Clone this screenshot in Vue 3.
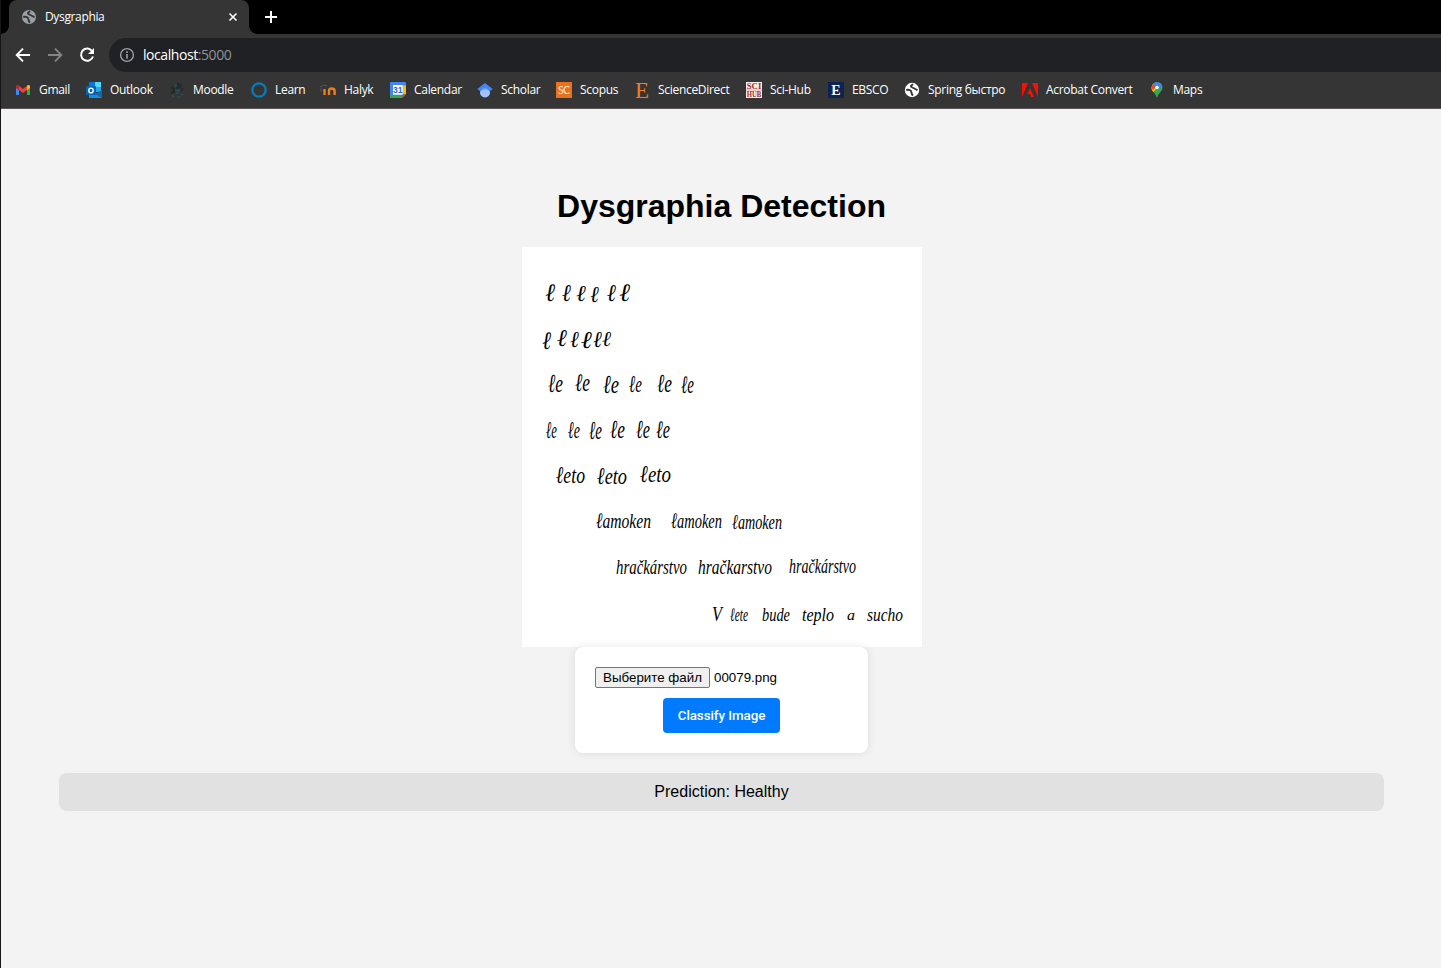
<script setup>
const bookmarks = [
  { icon: 'gmail', label: 'Gmail', width: 71 },
  { icon: 'outlook', label: 'Outlook', width: 83 },
  { icon: 'moodle', label: 'Moodle', width: 82 },
  { icon: 'learn', label: 'Learn', width: 69 },
  { icon: 'halyk', label: 'Halyk', width: 70 },
  { icon: 'calendar', label: 'Calendar', width: 87 },
  { icon: 'scholar', label: 'Scholar', width: 79 },
  { icon: 'scopus', label: 'Scopus', width: 78 },
  { icon: 'sd', label: 'ScienceDirect', width: 112 },
  { icon: 'scihub', label: 'Sci-Hub', width: 82 },
  { icon: 'ebsco', label: 'EBSCO', width: 76 },
  { icon: 'globe', label: 'Spring быстро', width: 118 },
  { icon: 'acrobat', label: 'Acrobat Convert', width: 127 },
  { icon: 'maps', label: 'Maps', width: 70 },
]

// Each word on the sample sheet: text, left, baseline, width, font size
const words = [
  ['ℓ', 23, 54, 10, 25], ['ℓ', 40, 54, 9, 24], ['ℓ', 54, 54, 10, 23], ['ℓ', 68, 55, 9, 23], ['ℓ', 85, 54, 9, 24], ['ℓ', 97, 54, 11, 25],
  ['ℓ', 20, 102, 9, 25], ['ℓ', 35, 99, 10, 24], ['ℓ', 48, 100, 9, 23], ['ℓ', 59, 101, 11, 24], ['ℓ', 71, 100, 9, 23], ['ℓ', 80, 99, 9, 21],
  ['ℓe', 26, 145, 15, 26], ['ℓe', 53, 144, 15, 25], ['ℓe', 81, 146, 16, 26], ['ℓe', 107, 145, 13, 24], ['ℓe', 135, 145, 15, 26], ['ℓe', 159, 146, 13, 25],
  ['ℓe', 24, 191, 11, 24], ['ℓe', 46, 191, 12, 24], ['ℓe', 67, 192, 13, 26], ['ℓe', 88, 191, 15, 26], ['ℓe', 114, 191, 14, 26], ['ℓe', 134, 191, 14, 25],
  ['ℓeto', 34, 236, 29, 24], ['ℓeto', 75, 237, 30, 24], ['ℓeto', 118, 235, 31, 24],
  ['ℓamoken', 74, 281, 55, 22], ['ℓamoken', 149, 281, 51, 22], ['ℓamoken', 210, 282, 50, 21],
  ['hračkárstvo', 94, 327, 71, 21], ['hračkarstvo', 176, 327, 74, 21], ['hračkárstvo', 267, 326, 67, 21],
  ['V', 190, 374, 10, 20], ['ℓete', 208, 374, 18, 19], ['bude', 240, 374, 28, 19], ['teplo', 280, 374, 32, 19], ['a', 325, 373, 8, 14], ['sucho', 345, 374, 36, 19],
]
</script>

<template>
  <div class="window">
    <header class="tabstrip">
      <div class="tab">
        <svg class="tabicon" viewBox="0 0 16 16"><circle cx="8" cy="8" r="7" fill="#9aa0a6" /><path d="M2.2 8Q7 7.2 7.3 9.8T9 13.5M9.3 2.4Q5 4 8.3 5.5T13.6 8.2" fill="none" stroke="#353535" stroke-width="1.9" /></svg>
        <span class="tabtitle">Dysgraphia</span>
        <svg class="close" viewBox="0 0 10 10"><path d="M1.5 1.5 8.5 8.5M8.5 1.5 1.5 8.5" stroke="#fff" stroke-width="1.6" /></svg>
      </div>
      <svg class="plus" viewBox="0 0 14 14"><path d="M7 1V13M1 7H13" stroke="#fff" stroke-width="2" /></svg>
    </header>

    <nav class="toolbar">
      <svg class="nav" viewBox="0 0 16 16"><path d="M15 8H2M8 1.7 1.7 8 8 14.3" fill="none" stroke="#fff" stroke-width="1.9" /></svg>
      <svg class="nav" viewBox="0 0 16 16"><path d="M1 8H14M8 1.7 14.3 8 8 14.3" fill="none" stroke="#858585" stroke-width="1.9" /></svg>
      <svg class="nav" viewBox="0 0 16 16"><path d="M13.2 4.2A6.1 6.1 0 1 0 14 9.5" fill="none" stroke="#fff" stroke-width="2" /><path d="M15 1V7H9Z" fill="#fff" /></svg>
      <div class="omnibox">
        <svg class="info" viewBox="0 0 16 16"><circle cx="8" cy="8" r="6.4" fill="none" stroke="#9aa0a6" stroke-width="1.4" /><path d="M8 7V11.7M8 4.3V5.9" stroke="#9aa0a6" stroke-width="1.6" /></svg>
        <span class="url">localhost<span class="port">:5000</span></span>
      </div>
    </nav>

    <nav class="bookmarks">
      <div v-for="b in bookmarks" :key="b.label" class="bookmark" :style="{ width: b.width + 'px' }">
        <svg class="bicon" viewBox="0 0 16 16">
          <g v-if="b.icon === 'gmail'">
            <path d="M1 4V13H4V7L1 4" fill="#4285f4" /><path d="M12 7V13H15V4Z" fill="#34a853" />
            <path d="M1 4.5Q1 2.5 3 3L8 7 13 3Q15 2.5 15 4.5L12 8 8 11 4 8Z" fill="#ea4335" />
            <path d="M12 4 13 3Q15 2.5 15 4.5V6L12 8Z" fill="#fbbc04" /><path d="M1 4.5Q1 2.5 3 3L4 4V8L1 6Z" fill="#c5221f" />
          </g>
          <g v-else-if="b.icon === 'outlook'">
            <path d="M3 0H15V10H3Z" fill="#28a8ea" /><path d="M9 0H15V5H9Z" fill="#50d9ff" /><path d="M3 0H9V5H3Z" fill="#0078d4" />
            <path d="M3 8 10 12 16 8V16H3Z" fill="#1490df" /><path d="M16 8V16L9 12Z" fill="#1066b5" />
            <rect y="4" width="10" height="9" rx="1" fill="#0364b8" /><ellipse cx="5" cy="8.5" rx="2.2" ry="2.4" fill="none" stroke="#fff" stroke-width="1.4" />
          </g>
          <g v-else-if="b.icon === 'moodle'" fill="none">
            <path d="M10 1Q7 4 9 7M12 2 10 7M2 5 6 8M2 11 6 9M12 9 14 6" stroke="#222829" stroke-width="2" />
            <path d="M7 2V5M6 8 9 9 11 7M3 13 5 15M8 10V12M8 15H12M12 12 14 13" stroke="#26566b" stroke-width="1.2" />
          </g>
          <circle v-else-if="b.icon === 'learn'" cx="8" cy="8" r="6.7" fill="none" stroke="#087cb5" stroke-width="2.3" />
          <g v-else-if="b.icon === 'halyk'" fill="none">
            <path d="M0 5 4 3 7 4M1 6V10" stroke="#555" stroke-width="1" />
            <path d="M4.5 13V7M9 13V9Q9 6.5 11.8 6.5T14.6 9V13" stroke="#e9801d" stroke-width="2.4" />
          </g>
          <g v-else-if="b.icon === 'calendar'">
            <rect width="16" height="16" rx="1" fill="#4285f4" /><path d="M12.5 3.5H16V12.5H12.5Z" fill="#fbbc04" />
            <path d="M0 12.5H12.5V16H1L0 15Z" fill="#34a853" /><path d="M16 12.5V16H12.5V12.5Z" fill="#353535" /><path d="M12.5 12.5H16L12.5 16Z" fill="#ea4335" />
            <rect x="3" y="3" width="9.7" height="9.7" fill="#fff" /><text x="7.8" y="11" text-anchor="middle" class="ic sans" font-size="8.5" fill="#1967d2">31</text>
          </g>
          <g v-else-if="b.icon === 'scholar'">
            <circle cx="8" cy="10.5" r="5" fill="#a0c3ff" /><path d="M8 1 15.7 7 12.5 9.5Q11 6.5 8 6.5T3.5 9.5L.3 7Z" fill="#4285f4" /><path d="M3.5 9Q5 6.5 8 6.5T12.5 9Q11 8 8 8T3.5 9" fill="#76a7fa" />
          </g>
          <g v-else-if="b.icon === 'scopus'"><rect width="16" height="16" fill="#e9711c" /><text x="8" y="12" text-anchor="middle" class="ic thin" font-size="10.5" textLength="12" fill="#ffe8d8">SC</text></g>
          <text v-else-if="b.icon === 'sd'" x="8" y="15.8" text-anchor="middle" class="ic serif" font-size="23" textLength="14" lengthAdjust="spacingAndGlyphs" fill="#ee7d22">E</text>
          <g v-else-if="b.icon === 'scihub'">
            <rect width="16" height="16" fill="#f5efed" /><text x=".7" y="6.6" textLength="14.6" lengthAdjust="spacingAndGlyphs" class="ic serifbold" font-size="8" fill="#a32822">SCI</text>
            <path d="M0 8H16" stroke="#d9a8a3" /><text x=".7" y="15" textLength="14.6" lengthAdjust="spacingAndGlyphs" class="ic serifbold" font-size="8" fill="#a32822">HUB</text>
          </g>
          <g v-else-if="b.icon === 'ebsco'"><rect width="16" height="16" fill="#0d2351" /><text x="8" y="13" text-anchor="middle" class="ic serifbold" font-size="14" fill="#fff">E</text></g>
          <g v-else-if="b.icon === 'globe'"><circle cx="8" cy="8" r="7.2" fill="#fff" /><path d="M2.2 8Q7 7.2 7.3 9.8T9 13.5M9.3 2.4Q5 4 8.3 5.5T13.6 8.2" fill="none" stroke="#353535" stroke-width="1.9" /></g>
          <path v-else-if="b.icon === 'acrobat'" d="M0 1H6L0 15ZM10 1H16V15ZM8 6 12 15H9.3L8 12H5.3Z" fill="#fa0f00" />
          <g v-else>
            <path d="M3.5 9Q2.5 7.5 2.5 5.5A5.5 5.5 0 0 1 13.5 5.5C13.5 9 9.5 11 8.5 15Q8 16 7.5 15Q7 12.5 3.5 9" fill="#34a853" />
            <path d="M3.5 9Q2.5 7.5 2.5 5.5L4 2 8 6 4.5 10" fill="#fbbc04" /><path d="M2.6 6 4 2 7 4.5 4 8Z" fill="#ea4335" />
            <path d="M4 2A5.5 5.5 0 0 1 13 3.3L9 7 7 4.5Z" fill="#4285f4" /><circle cx="8" cy="5.5" r="1.8" fill="#fff" />
          </g>
        </svg>
        <span class="blabel">{{ b.label }}</span>
      </div>
    </nav>

    <main class="page">
      <h1>Dysgraphia Detection</h1>
      <svg class="sheet" viewBox="0 0 400 400">
        <text v-for="(w, i) in words" :key="i" class="ink" :x="w[1]" :y="w[2]" :textLength="w[3]" :font-size="w[4]" lengthAdjust="spacingAndGlyphs">{{ w[0] }}</text>
      </svg>
      <form class="card" @submit.prevent>
        <div class="filerow">
          <button type="button" class="file">Выберите файл</button>
          <span class="filename">00079.png</span>
        </div>
        <button type="submit" class="classify">Classify Image</button>
      </form>
      <div class="prediction">Prediction: Healthy</div>
    </main>
  </div>
</template>

<style>
body { margin: 0; background: #f3f3f3; overflow: hidden; }
</style>

<style scoped>
.window { box-sizing: border-box; height: 968px; border-left: 1px solid #161616; overflow: hidden; font-family: "Open Sans", "Noto Sans", sans-serif; color: #fff; display: flex; flex-direction: column; background: #f3f3f3; }
svg { flex: none; display: block; overflow: visible; }
.tabstrip { height: 34px; background: #000; display: flex; align-items: center; flex: none; }
.tab { position: relative; box-sizing: border-box; margin-left: 8px; width: 240px; height: 34px; background: #353535; border-radius: 8px 8px 0 0; display: flex; align-items: center; padding: 0 11px 0 12px; }
.tab::before, .tab::after { content: ""; position: absolute; bottom: 0; width: 8px; height: 8px; }
.tab::before { left: -8px; background: radial-gradient(circle at 0 0, #000 7.5px, #353535 8px); }
.tab::after { right: -8px; background: radial-gradient(circle at 100% 0, #000 7.5px, #353535 8px); }
.tabicon { width: 16px; height: 16px; }
.tabtitle { flex: 1; margin-left: 8px; padding-bottom: 1px; font-size: 12px; font-weight: 500; letter-spacing: -0.35px; }
.close { width: 10px; height: 10px; }
.plus { width: 14px; height: 14px; margin-left: 15px; }
.toolbar { height: 38px; padding: 4px 0 0 14px; box-sizing: border-box; background: #353535; display: flex; align-items: center; flex: none; }
.nav { width: 16px; height: 16px; margin-right: 16px; }
.omnibox { flex: 1; height: 34px; margin-left: -2px; background: #202124; border-radius: 17px 0 0 17px; display: flex; align-items: center; }
.info { width: 16px; height: 16px; margin-left: 10px; }
.url { font-size: 14px; margin-left: 8px; padding-bottom: 2px; letter-spacing: -0.43px; }
.port { color: #8f9296; }
.bookmarks { height: 37px; box-sizing: border-box; padding-left: 14px; border-bottom: 1px solid #5b5555; background: #353535; display: flex; align-items: center; flex: none; }
.bookmark { display: flex; align-items: center; gap: 8px; flex: none; white-space: nowrap; }
.bicon { width: 16px; height: 16px; }
.blabel { padding-bottom: 1px; font-size: 12px; font-weight: 500; letter-spacing: -0.3px; }
.ic.sans { font-family: "Liberation Sans", sans-serif; font-weight: 700; }
.ic.thin { font-family: Lato, sans-serif; }
.ic.serif { font-family: "Liberation Serif", serif; }
.ic.serifbold { font-family: "Liberation Serif", serif; font-weight: 700; }
.page { flex: 1; box-sizing: border-box; padding: 79px 57px 0 58px; display: flex; flex-direction: column; align-items: center; color: #000; font-family: "Liberation Sans", Arial, sans-serif; }
h1 { margin: 0 0 22px; font-size: 32px; line-height: 37px; font-weight: 700; }
.sheet { width: 400px; height: 400px; background: #fff; margin-left: 1px; }
.ink { font-family: "Liberation Serif", serif; font-style: italic; fill: #000; }
.card { position: relative; box-sizing: border-box; width: 293px; height: 106px; padding: 20px; border-radius: 8px; background: #fff; box-shadow: 0 0 10px rgba(0, 0, 0, 0.1); display: flex; flex-direction: column; align-items: center; gap: 10px; }
.filerow { align-self: stretch; height: 21px; display: flex; align-items: center; gap: 4px; }
.file { box-sizing: border-box; width: 115px; height: 21px; padding: 0; border: 1px solid #767676; border-radius: 2px; background: #efefef; color: #000; font: 13.333px "Liberation Sans", Arial, sans-serif; white-space: nowrap; }
.filename { font-size: 13.333px; }
.classify { width: 117px; height: 35px; padding: 0; border: 0; border-radius: 4px; background: #007bff; color: #fff; font: 500 13.333px Roboto, sans-serif; letter-spacing: -0.05px; }
.prediction { align-self: stretch; margin-top: 20px; height: 38px; line-height: 37px; border-radius: 8px; background: #e1e1e1; text-align: center; font-size: 16px; }
</style>
